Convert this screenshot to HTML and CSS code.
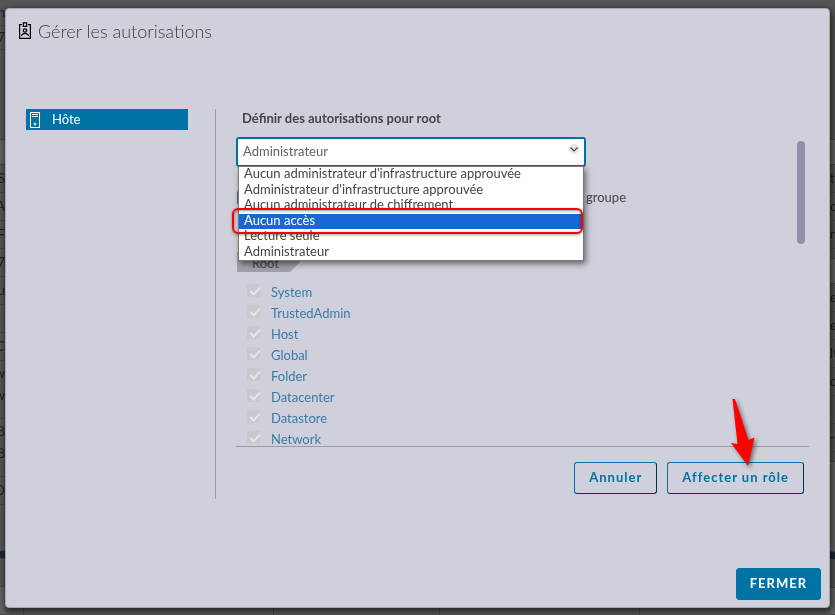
FILE: index.html
```html
<!DOCTYPE html>
<html lang="fr">
<head>
<meta charset="utf-8">
<meta name="viewport" content="width=device-width, initial-scale=1">
<title>Gérer les autorisations</title>
<link rel="stylesheet" href="styles.css">
</head>
<body>
<div class="backdrop" aria-hidden="true">
  <div class="strip strip-left">
    <div class="cell h-26">n</div>
    <div class="cell h-24">7</div>
    <div class="cell h-90"></div>
    <div class="cell band h-25"></div>
    <div class="cell h-28">S</div>
    <div class="cell h-28">A</div>
    <div class="cell h-28">F</div>
    <div class="cell h-28">87</div>
    <div class="cell h-28">u</div>
    <div class="cell h-28"></div>
    <div class="cell h-28">C</div>
    <div class="cell plain h-24">w</div>
    <div class="cell h-34">w</div>
    <div class="cell plain h-24">18</div>
    <div class="cell h-34">18</div>
    <div class="cell h-28">D</div>
    <div class="cell h-46"></div>
    <div class="cell bar"></div>
    <div class="cell h-28"></div>
    <div class="cell band rest"></div>
  </div>
  <div class="strip strip-bottom">
    <span class="col-a"></span><span class="col-b"></span><span class="col-c"></span><span class="col-d"></span>
  </div>
  <div class="strip strip-right">
    <div class="cell h-140"></div>
    <div class="cell band h-25"></div>
    <div class="cell h-28">te</div>
    <div class="cell h-28">o</div>
    <div class="cell h-28">n</div>
    <div class="cell h-10"></div>
    <div class="cell band h-25"></div>
    <div class="cell h-28">e</div>
    <div class="cell h-28">e</div>
    <div class="cell h-28">lt</div>
    <div class="cell h-28">co</div>
    <div class="cell h-28"></div>
    <div class="cell h-28">-</div>
    <div class="cell h-10"></div>
    <div class="cell band h-90"></div>
    <div class="cell bar"></div>
    <div class="cell h-28"></div>
    <div class="cell band rest"></div>
  </div>
</div>

<div class="dialog" role="dialog" aria-labelledby="dialog-title">
  <header class="dialog-header">
    <svg class="badge-icon" width="14" height="18" viewBox="0 0 14 18" fill="none" stroke="#000" stroke-width="1.2">
      <path d="M4 2.6H1.6v13.8h10.8V2.6H10"/>
      <path d="M5.3 4.4V.8h3.4v3.6z"/>
      <circle cx="7" cy="8.5" r="1.7"/>
      <path d="M3.6 14v-.8c.6-1.2 1.900-1.900 3.400-1.900s2.800.7 3.400 1.900v.8"/>
    </svg>
    <h1 id="dialog-title">Gérer les autorisations</h1>
  </header>

  <div class="dialog-body">
    <nav class="objects">
      <a class="object" href="#hote">
        <svg width="10" height="16" viewBox="0 0 10 16" fill="none" stroke="#fff">
          <rect x=".5" y=".5" width="9" height="15"/>
          <path d="M2 2.500h6M2 4.500h6"/>
          <circle cx="5" cy="12" r="1.500" fill="#b5dcec" stroke="none"/>
        </svg>
        <span>Hôte</span>
      </a>
    </nav>

    <form class="panel">
      <label class="panel-title" for="role">Définir des autorisations pour root</label>
      <div class="settings">
        <div class="fields">
          <div class="role-field">
            <select id="role"><option>Administrateur</option></select>
            <svg class="chevron" width="10" height="10" viewBox="0 0 10 10"><circle cx="5" cy="5" r="5" fill="#e4e4e4"/><path d="M1.500 3.500 5 7l3.500-3.500" fill="none" stroke="#444" stroke-width="1.100"/></svg>
            <ul class="options" role="listbox" aria-label="Rôle">
              <li role="option">Aucun administrateur d'infrastructure approuvée</li>
              <li role="option">Administrateur d'infrastructure approuvée</li>
              <li role="option">Aucun administrateur de chiffrement</li>
              <li role="option" class="active" aria-selected="true">Aucun accès</li>
              <li role="option">Lecture seule</li>
              <li role="option">Administrateur</li>
            </ul>
            <span class="highlight"></span>
          </div>
          <div class="group-row">
            <input type="checkbox" id="group"><label for="group">groupe</label>
          </div>
          <div class="root-tag">Root</div>
          <ul class="privileges">
            <li><input type="checkbox" id="p1" checked disabled><label for="p1">System</label></li>
            <li><input type="checkbox" id="p2" checked disabled><label for="p2">TrustedAdmin</label></li>
            <li><input type="checkbox" id="p3" checked disabled><label for="p3">Host</label></li>
            <li><input type="checkbox" id="p4" checked disabled><label for="p4">Global</label></li>
            <li><input type="checkbox" id="p5" checked disabled><label for="p5">Folder</label></li>
            <li><input type="checkbox" id="p6" checked disabled><label for="p6">Datacenter</label></li>
            <li><input type="checkbox" id="p7" checked disabled><label for="p7">Datastore</label></li>
            <li><input type="checkbox" id="p8" checked disabled><label for="p8">Network</label></li>
          </ul>
        </div>
        <div class="scroll-thumb"></div>
      </div>
      <div class="actions">
        <button type="button" class="outline">Annuler</button>
        <button type="button" class="outline">Affecter un rôle</button>
        <svg class="arrow" width="26" height="70" viewBox="0 0 26 70"><path d="M2.500 1h2.500L18.500 42l6-2.500L18 68 1 45l6.500 1z" fill="#f00"/></svg>
      </div>
    </form>
  </div>

  <footer class="dialog-footer">
    <button type="button" class="primary">FERMER</button>
  </footer>
</div>
</body>
</html>
```
FILE: styles.css
```css
* { box-sizing: border-box; }

body {
  margin: 0;
  min-height: 100vh;
  background: #555558;
  color: #454549;
  font: 13px/21px Lato, "Open Sans", sans-serif;
}

ul { margin: 0; padding: 0; list-style: none; }

/* Dimmed page behind the dialog */
.backdrop {
  position: fixed;
  inset: 0;
  display: grid;
  grid-template-columns: 5px 1fr 5px;
  overflow: hidden;
  color: #222;
}

.strip { min-width: 0; overflow: hidden; display: flex; flex-direction: column; }
.strip-left .cell { justify-content: flex-end; }
.strip-bottom { flex-direction: row; align-items: flex-end; }
.strip-bottom span { flex: none; height: 12px; border-right: 1px solid #454547; }
.strip-bottom .col-a { width: 19px; }
.strip-bottom .col-b { width: 250px; }
.strip-bottom .col-c { width: 166px; }
.strip-bottom .col-d { width: 200px; }

.cell {
  display: flex;
  flex: none;
  align-items: center;
  border-bottom: 1px solid #48484a;
}
.plain { border-bottom: 0; }
.band { background: #626264; }
.bar { height: 8px; background: #1b2a34; }
.rest { flex: 1; }
.h-10 { height: 10px; }
.h-24 { height: 24px; }
.h-25 { height: 25px; }
.h-26 { height: 26px; }
.h-28 { height: 28px; }
.h-34 { height: 34px; align-items: flex-start; }
.h-46 { height: 46px; }
.h-90 { height: 90px; }
.h-140 { height: 140px; }

/* Dialog */
.dialog {
  position: relative;
  display: flex;
  flex-direction: column;
  min-height: calc(100vh - 15px);
  margin: 8px 5px 7px;
  border: 1px solid #a5a5ae;
  border-radius: 4px;
  background: #d0d0dc;
  box-shadow: 1px 2px 6px 1px rgba(0, 0, 0, .6);
}

.dialog-header {
  display: flex;
  align-items: center;
  gap: 6px;
  padding: 12px 12px 0;
}

.dialog-header h1 {
  margin: 0;
  color: #3c3c40;
  font-size: 18px;
  line-height: 20px;
  font-weight: 300;
}

.dialog-body {
  display: grid;
  grid-template-columns: 162px 1fr;
  gap: 27px;
  padding: 68px 20px 0;
}

.object {
  display: flex;
  align-items: center;
  gap: 12px;
  height: 21px;
  padding-left: 4px;
  background: #0072a3;
  color: #fff;
  text-decoration: none;
}

.object span { line-height: 20px; padding-bottom: 2px; }

.panel {
  padding-left: 20px;
  border-left: 1px solid #9a9aa6;
}

.panel-title {
  display: block;
  padding: 0 6px;
  height: 28px;
  line-height: 19px;
  font-weight: 700;
}

.settings {
  display: flex;
  justify-content: space-between;
  border-bottom: 1px solid #9a9aa6;
}

.fields { flex: 1; }

.role-field {
  position: relative;
  width: 350px;
}

select {
  appearance: none;
  display: block;
  width: 100%;
  height: 30px;
  padding: 0 5px 2px;
  border: 2px solid #0072a3;
  border-radius: 3px;
  background: #fff;
  color: #626266;
  font: inherit;
}

.chevron { position: absolute; top: 7px; right: 7px; }

.options {
  position: absolute;
  z-index: 1;
  top: 29px;
  left: 2px;
  right: 2px;
  display: grid;
  grid-template-rows: repeat(6, 1fr);
  height: 95px;
  border: 1px solid #77777b;
  background: #fff;
  color: #454549;
  line-height: 12px;
  box-shadow: 2px 3px 6px rgba(0, 0, 0, .5);
}

.options li { padding: 0 5px; }
.options .active { background: #1967d2; color: #fff; }

.highlight {
  position: absolute;
  z-index: 2;
  top: 71px;
  left: -4px;
  right: 3px;
  height: 26px;
  border: 2px solid #f00;
  border-radius: 6px;
  box-shadow: 0 1px 3px rgba(0, 0, 0, .4), inset 0 1px 3px rgba(0, 0, 0, .4);
}

.group-row {
  display: flex;
  align-items: center;
  gap: 336px;
  padding: 20px 1px 0;
}

input[type="checkbox"] {
  appearance: none;
  width: 13px;
  height: 13px;
  margin: 0;
  border-radius: 1px;
  background: #4c6b80;
}

.root-tag {
  width: 63px;
  height: 20px;
  margin: 44px 1px 0;
  padding-left: 15px;
  background: #a0a0a9;
  line-height: 22px;
  clip-path: polygon(0 0, 100% 0, 100% 50%, 84% 100%, 0 100%);
}

.privileges { padding: 10px 11px 0; height: 174px; }
.privileges li { display: flex; gap: 11px; height: 21px; }
.privileges input[type="checkbox"] {
  background: #c8c8cf;
  position: relative;
  width: 13px;
  height: 13px;
  margin-top: 2px;
}
.privileges input::after {
  content: "";
  position: absolute;
  top: 1px;
  left: 5px;
  width: 4px;
  height: 8px;
  border: solid #e6e6ea;
  border-width: 0 2px 2px 0;
  transform: rotate(42deg);
}
.privileges label { color: #397ba6; }

.scroll-thumb {
  width: 8px;
  height: 103px;
  margin: 4px 4px 0 0;
  border-radius: 4px;
  background: #9090aa;
}

.actions {
  position: relative;
  display: flex;
  justify-content: flex-end;
  gap: 10px;
  padding: 15px 5px 5px 0;
}

button {
  height: 32px;
  padding: 0 13px 2px;
  border: 1px solid #0072a3;
  border-radius: 3px;
  font: 700 13px/26px Lato, "Open Sans", sans-serif;
  letter-spacing: 1px;
}

.outline {
  padding: 0 14px 2px;
  border-right-color: #00364d;
  border-bottom-color: #00364d;
  background: transparent;
  color: #0072a3;
}

.primary { background: #0072a3; color: #fff; }

.arrow {
  position: absolute;
  top: -49px;
  right: 53px;
  filter: drop-shadow(2px 2px 2px rgba(0, 0, 0, .5));
}

.dialog-footer {
  display: flex;
  justify-content: flex-end;
  margin-top: auto;
  padding: 0 8px 7px;
}
```
